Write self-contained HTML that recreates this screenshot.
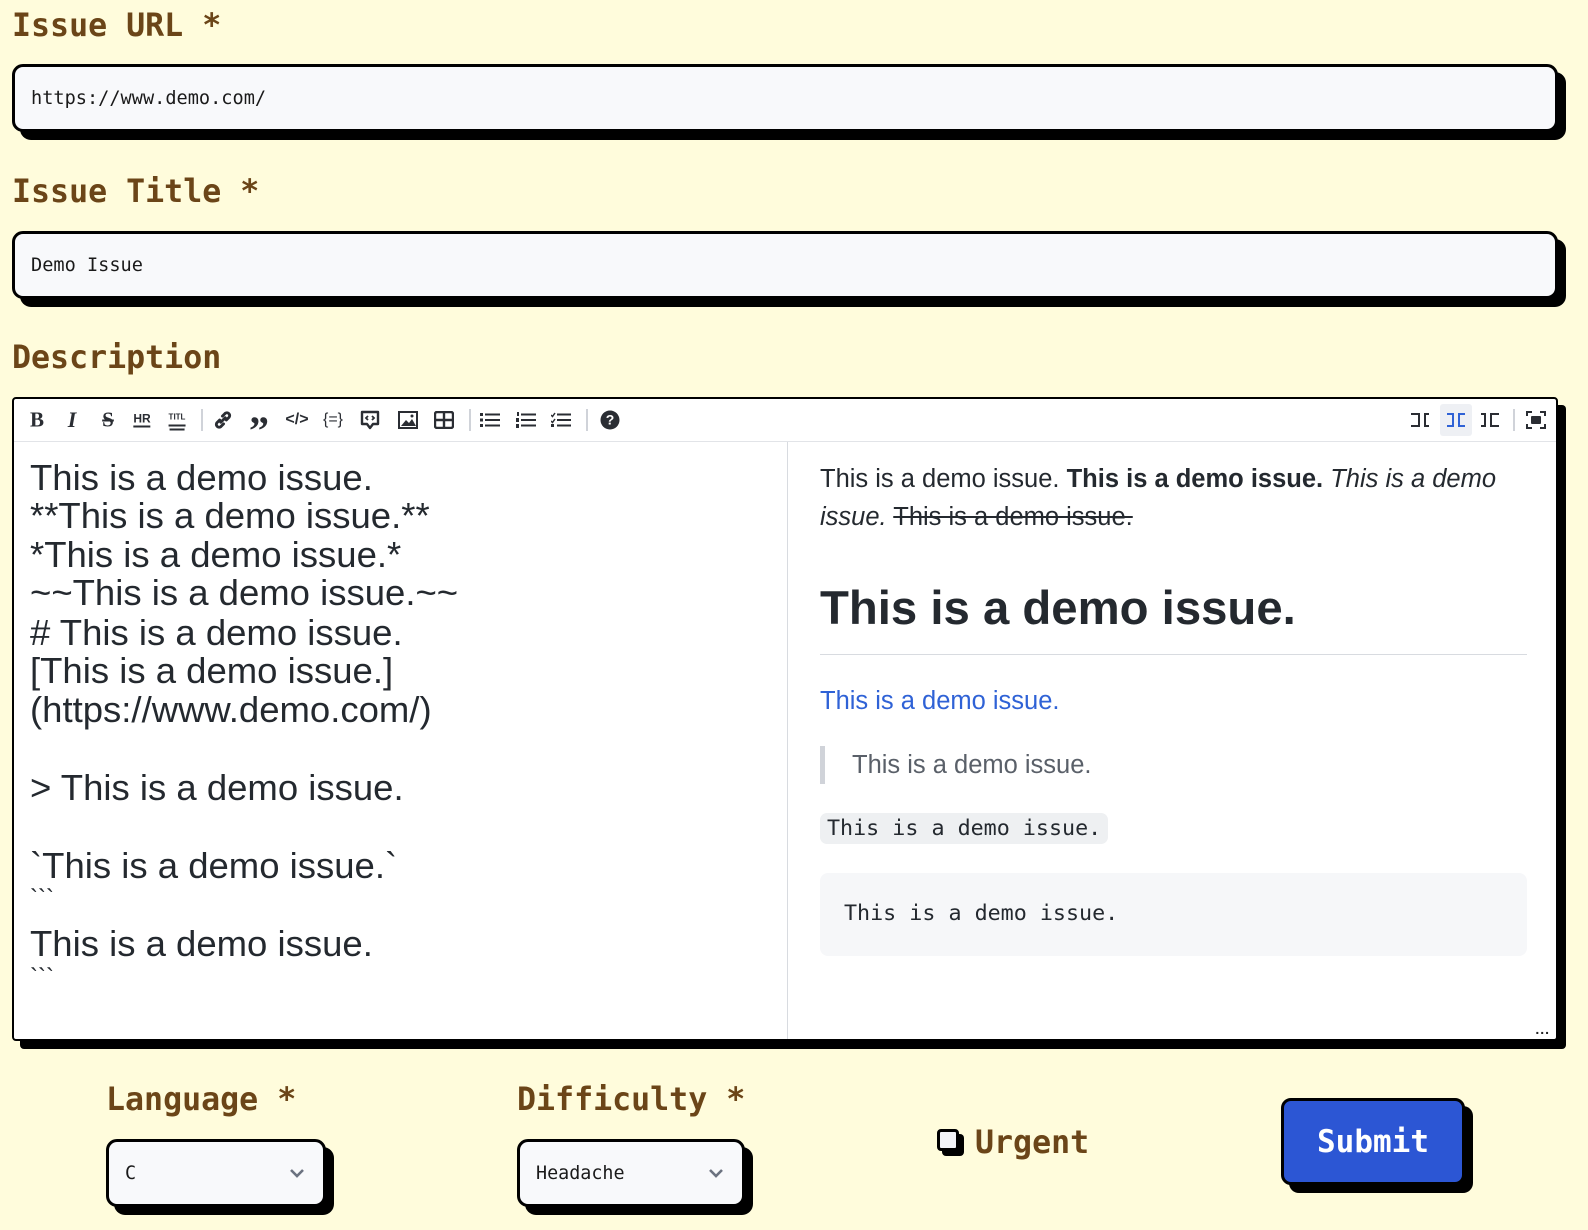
<!DOCTYPE html>
<html><head><meta charset="utf-8"><style>
*{box-sizing:border-box;margin:0;padding:0}
body{width:1588px;height:1230px;background:#fffcdc;position:relative;overflow:hidden;font-family:"Liberation Sans",sans-serif}
.lbl{position:absolute;font-family:"DejaVu Sans Mono","Liberation Mono",monospace;font-weight:bold;font-size:31.6px;color:#6b4518;line-height:36px}
.inp{position:absolute;background:#f8f9fb;border:3px solid #000;border-radius:11px;box-shadow:8px 8px 0 #000;font-family:"DejaVu Sans Mono","Liberation Mono",monospace;font-size:18.6px;color:#1a1a1a;padding-left:16px;display:flex;align-items:center}
.ed{position:absolute;left:12px;top:397px;width:1546px;height:644px;background:#fff;border:2px solid #000;border-radius:4px;box-shadow:8px 8px 0 #000;overflow:hidden}
.tb{position:absolute;left:0;top:0;right:0;height:43px;border-bottom:1px solid #e2e4e8}
.ic{position:absolute;top:21px;transform:translate(-50%,-50%);color:#2a2d33;font-weight:bold;line-height:1}
.sep{position:absolute;top:10px;width:2px;height:22px;background:#d0d3d9}
.lt{position:absolute;left:16px;font-size:36.5px;color:#24292f;line-height:38px;white-space:nowrap}
.rt{position:absolute;left:806px;font-size:25.5px;color:#24292f;white-space:nowrap;line-height:32px}
.mono{font-family:"DejaVu Sans Mono","Liberation Mono",monospace}
</style></head><body>
<div class="lbl" style="left:12px;top:8px">Issue URL *</div>
<div class="inp" style="left:12px;top:64px;width:1546px;height:68px">https://www.demo.com/</div>
<div class="lbl" style="left:12px;top:174px">Issue Title *</div>
<div class="inp" style="left:12px;top:231px;width:1546px;height:68px">Demo Issue</div>
<div class="lbl" style="left:12px;top:340px">Description</div>

<div class="ed">
 <div class="tb">
  <span class="ic" style="left:23px;font-family:'Liberation Serif',serif;font-size:21px">B</span>
  <span class="ic" style="left:58px;font-family:'Liberation Serif',serif;font-style:italic;font-size:22px">I</span>
  <span class="ic" style="left:94px;font-family:'Liberation Serif',serif;font-size:21px;text-decoration:line-through">S</span>
  <span class="ic" style="left:128px;font-size:12px;border-bottom:2px solid #2a2d33;padding-bottom:1px">HR</span>
  <span class="ic" style="left:163px;font-size:8px;border-bottom:2px solid #2a2d33;padding-bottom:3px;box-shadow:0 3px 0 -1px #fff,0 5px 0 -1px #2a2d33">TITL</span>
  <div class="sep" style="left:187px"></div>
  <svg class="ic" style="left:209px" width="20" height="20" viewBox="0 0 18 18"><path d="M7 11 L11 7 M6 9 L3.5 11.5 a2.5 2.5 0 0 0 3.5 3.5 L9.5 12.5 M12 9 L14.5 6.5 a2.5 2.5 0 0 0 -3.5 -3.5 L8.5 5.5" stroke="#2a2d33" stroke-width="2.6" fill="none" stroke-linecap="round"/></svg>
  <span class="ic" style="left:245px;font-family:'Liberation Serif',serif;font-size:40px;top:32px">”</span>
  <span class="ic" style="left:283px;font-size:16px">&lt;/&gt;</span>
  <span class="ic" style="left:319px;font-size:16px;font-weight:normal">{=}</span>
  <svg class="ic" style="left:356px" width="22" height="22" viewBox="0 0 22 22"><path d="M3 3h16v12h-5l-3 4-3-4H3z" stroke="#2a2d33" stroke-width="2.4" fill="none" stroke-linejoin="round"/><path d="M9 7l-2 2 2 2M13 7l2 2-2 2" stroke="#2a2d33" stroke-width="1.8" fill="none"/></svg>
  <svg class="ic" style="left:394px" width="20" height="18" viewBox="0 0 20 18"><rect x="1" y="1" width="18" height="16" stroke="#2a2d33" stroke-width="2" fill="none"/><path d="M3 15l5-6 3 3 3-4 4 7z" fill="#2a2d33"/><circle cx="14" cy="5" r="1.5" fill="#2a2d33"/></svg>
  <svg class="ic" style="left:430px" width="20" height="18" viewBox="0 0 20 18"><rect x="1" y="1" width="18" height="16" rx="2" stroke="#2a2d33" stroke-width="2.4" fill="none"/><path d="M1 9h18M10 1v16" stroke="#2a2d33" stroke-width="2.4"/></svg>
  <div class="sep" style="left:455px"></div>
  <svg class="ic" style="left:476px" width="20" height="16" viewBox="0 0 20 16"><g fill="#2a2d33"><rect x="0" y="1" width="3" height="3"/><rect x="0" y="6.5" width="3" height="3"/><rect x="0" y="12" width="3" height="3"/><rect x="5" y="1.5" width="15" height="2"/><rect x="5" y="7" width="15" height="2"/><rect x="5" y="12.5" width="15" height="2"/></g></svg>
  <svg class="ic" style="left:512px" width="20" height="16" viewBox="0 0 20 16"><g fill="#2a2d33"><rect x="1" y="0" width="2" height="4"/><rect x="0" y="6" width="3" height="4"/><rect x="0" y="12" width="3" height="4"/><rect x="5" y="1.5" width="15" height="2"/><rect x="5" y="7" width="15" height="2"/><rect x="5" y="12.5" width="15" height="2"/></g></svg>
  <svg class="ic" style="left:547px" width="20" height="16" viewBox="0 0 20 16"><g fill="#2a2d33"><path d="M0 3l1.5 1.5L4 1" stroke="#2a2d33" stroke-width="1.5" fill="none"/><path d="M0 9l1.5 1.5L4 7" stroke="#2a2d33" stroke-width="1.5" fill="none"/><rect x="0" y="12" width="3" height="3"/><rect x="6" y="1.5" width="14" height="2"/><rect x="6" y="7" width="14" height="2"/><rect x="6" y="12.5" width="14" height="2"/></g></svg>
  <div class="sep" style="left:572px"></div>
  <span class="ic" style="left:596px;width:19px;height:19px;border-radius:50%;background:#2a2d33;color:#fff;font-size:14px;text-align:center;line-height:19px">?</span>
  <svg class="ic" style="left:1406px" width="22" height="16" viewBox="0 0 22 16"><path d="M2 2h8v12H2M20 2h-4v12h4" stroke="#2a2d33" stroke-width="2" fill="none"/></svg>
  <div style="position:absolute;left:1426px;top:5px;width:32px;height:32px;background:#eef0f4;border-radius:3px"></div>
  <svg class="ic" style="left:1442px" width="22" height="16" viewBox="0 0 22 16"><path d="M2 2h6v12H2M20 2h-6v12h6" stroke="#2f62d6" stroke-width="2" fill="none"/></svg>
  <svg class="ic" style="left:1476px" width="22" height="16" viewBox="0 0 22 16"><path d="M2 2h4v12H2M20 2h-8v12h8" stroke="#2a2d33" stroke-width="2" fill="none"/></svg>
  <div class="sep" style="left:1499px"></div>
  <svg class="ic" style="left:1522px" width="20" height="18" viewBox="0 0 20 18"><path d="M1 5V1h5M14 1h5v4M19 13v4h-5M6 17H1v-4" stroke="#2a2d33" stroke-width="2" fill="none"/><rect x="5" y="5" width="10" height="8" rx="1" fill="#2a2d33"/></svg>
 </div>
 <div style="position:absolute;left:773px;top:43px;bottom:0;width:1px;background:#d8dbe0"></div>
 <div class="lt" style="top:60px">This is a demo issue.</div>
 <div class="lt" style="top:98px">**This is a demo issue.**</div>
 <div class="lt" style="top:137px">*This is a demo issue.*</div>
 <div class="lt" style="top:175px">~~This is a demo issue.~~</div>
 <div class="lt" style="top:215px"># This is a demo issue.</div>
 <div class="lt" style="top:253px">[This is a demo issue.]</div>
 <div class="lt" style="top:292px">(https://www.demo.com/)</div>
 <div class="lt" style="top:370px">&gt; This is a demo issue.</div>
 <div class="lt" style="top:448px">&#96;This is a demo issue.&#96;</div>
 <div class="lt" style="top:488px;font-size:24px;line-height:24px">&#96;&#96;&#96;</div>
 <div class="lt" style="top:526px">This is a demo issue.</div>
 <div class="lt" style="top:567px;font-size:24px;line-height:24px">&#96;&#96;&#96;</div>

 <div class="rt" style="top:64px">This is a demo issue. <b>This is a demo issue.</b> <i>This is a demo</i></div>
 <div class="rt" style="top:102px"><i>issue.</i> <s>This is a demo issue.</s></div>
 <div class="rt" style="top:180px;font-size:47.3px;font-weight:bold;line-height:60px">This is a demo issue.</div>
 <div style="position:absolute;left:806px;top:255px;width:707px;height:1px;background:#d8dbe0"></div>
 <div class="rt" style="top:286px;color:#2f62d6">This is a demo issue.</div>
 <div style="position:absolute;left:806px;top:347px;width:5px;height:38px;background:#d0d3d9"></div>
 <div class="rt" style="top:350px;left:838px;color:#5a6069">This is a demo issue.</div>
 <div class="rt mono" style="top:414px;height:31px;padding:0 7px;background:#eef0f2;border-radius:7px;font-size:21.7px;line-height:31px">This is a demo issue.</div>
 <div style="position:absolute;left:806px;top:474px;width:707px;height:83px;background:#f6f7f9;border-radius:8px"></div>
 <div class="rt mono" style="top:499px;left:830px;font-size:21.7px">This is a demo issue.</div>
 <div style="position:absolute;right:6px;bottom:2px;font-size:14px;color:#222;letter-spacing:1px;font-weight:bold">...</div>
</div>

<div class="lbl" style="left:106px;top:1082px">Language *</div>
<div class="inp" style="left:106px;top:1139px;width:220px;height:68px;font-size:18.4px">C<svg style="position:absolute;right:18px;top:26px" width="16" height="10" viewBox="0 0 16 10"><path d="M2 2l6 6 6-6" stroke="#6b7280" stroke-width="2.6" fill="none"/></svg></div>
<div class="lbl" style="left:517px;top:1082px">Difficulty *</div>
<div class="inp" style="left:517px;top:1139px;width:228px;height:68px;font-size:18.4px">Headache<svg style="position:absolute;right:18px;top:26px" width="16" height="10" viewBox="0 0 16 10"><path d="M2 2l6 6 6-6" stroke="#6b7280" stroke-width="2.6" fill="none"/></svg></div>
<div style="position:absolute;left:937px;top:1129px;width:22px;height:22px;background:#f2f3f7;border:3px solid #000;border-radius:4px;box-shadow:5px 5px 0 #000"></div>
<div class="lbl" style="left:975px;top:1125px">Urgent</div>
<div style="position:absolute;left:1281px;top:1098px;width:184px;height:87px;background:#2c56d4;border:3px solid #000;border-radius:10px;box-shadow:8px 8px 0 #000;color:#fff;font-family:'DejaVu Sans Mono','Liberation Mono',monospace;font-weight:bold;font-size:31px;display:flex;align-items:center;justify-content:center">Submit</div>
</body></html>
